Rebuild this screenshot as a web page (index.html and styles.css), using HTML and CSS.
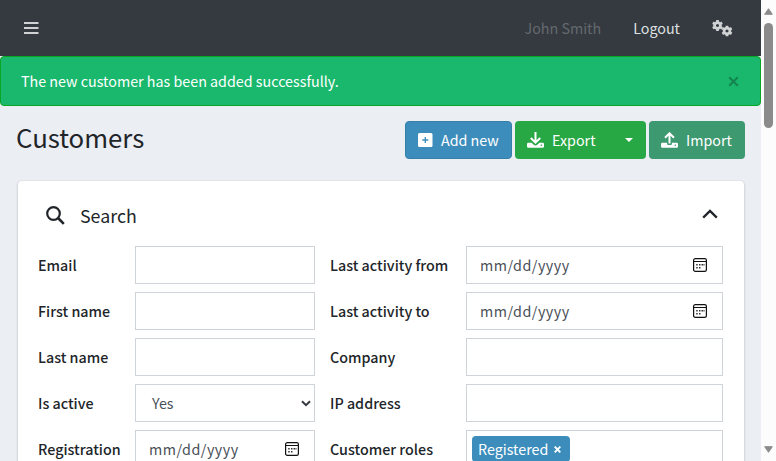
FILE: index.html
```html
<!DOCTYPE html>
<html lang="en">
<head>
<meta charset="utf-8">
<title>Customers</title>
<link rel="stylesheet" href="styles.css">
</head>
<body>
<svg class="defs" width="0" height="0">
  <symbol id="calendar" viewBox="0 0 14 14">
    <rect x=".6" y=".6" width="12.8" height="12.8" rx="1.7" fill="none" stroke="#111" stroke-width="1.2"/>
    <path d="M1 3.500h12" stroke="#111" stroke-width="1"/>
    <path d="M6 6h1.500v1.500H6zM8.500 6H10v1.500H8.500zM3.200 6h1.500v1.500H3.200zM10.500 6h1v1.500h-1zM3.200 9h1.500v1.500H3.200zM6 9h1.500v1.500H6z" fill="#333"/>
  </symbol>
  <symbol id="gear" viewBox="-6 -6 12 12">
    <circle r="3.200" fill="none" stroke="currentColor" stroke-width="3"/>
    <path d="M0-5.900v2M0 3.900v2M-5.100-3l1.700 1M3.400 2l1.700 1M-5.100 3l1.700-1M3.400-2l1.700-1" stroke="currentColor" stroke-width="3"/>
  </symbol>
</svg>
<div class="window">
  <div class="page">
    <header class="navbar">
      <svg class="bars" width="15" height="12" viewBox="0 0 15 12"><path d="M0 1h14.500M0 6h14.500M0 11h14.500" stroke="currentColor" stroke-width="2"/></svg>
      <span class="user">John Smith</span>
      <span class="logout">Logout</span>
      <svg class="gears" width="21" height="17" viewBox="0 0 21 17"><use href="#gear" x="0" y="0" width="11" height="11"/><use href="#gear" x="9.500" y="5.500" width="11" height="11"/></svg>
    </header>
    <div class="alert">
      <span class="alert-text">The new customer has been added successfully.</span>
      <svg class="close" width="11" height="11" viewBox="0 0 11 11"><path d="M1.200 1.200l8.600 8.600M9.800 1.200L1.200 9.800" stroke="currentColor" stroke-width="2"/></svg>
    </div>
    <div class="title-row">
      <h1>Customers</h1>
      <div class="btn add">
        <svg width="15" height="14" viewBox="0 0 15 14"><rect width="14.500" height="14" rx="1.500" fill="#fff"/><path d="M7.300 4v6M4.300 7h6" stroke="#3c8dbc" stroke-width="1.300"/></svg>
        <span>Add new</span>
      </div>
      <div class="btn export">
        <svg width="17" height="16" viewBox="0 0 17 16"><path d="M8.500 0v10M3.800 6l4.700 4.600L13.200 6" fill="none" stroke="#fff" stroke-width="2"/><path d="M1.400 10.700h3.200l2.100 2.100q1.800 1.400 3.600 0l2.100-2.100h3.200q1.400 0 1.400 1.400v2.300q0 1.400-1.400 1.400H1.400Q0 15.800 0 14.400v-2.300q0-1.400 1.400-1.400z" fill="#fff"/><circle cx="14.300" cy="13.300" r=".8" fill="#28a745"/></svg>
        <span>Export</span>
        <i class="caret"></i>
      </div>
      <div class="btn import">
        <svg width="17" height="16" viewBox="0 0 17 16"><path d="M8.500 11.500V1.500M4 5.700l4.500-4.400L13 5.700" fill="none" stroke="#fff" stroke-width="2"/><path d="M1.400 10.700h4.700v1.200q0 1.200 2.400 1.200t2.400-1.200v-1.200h4.700q1.400 0 1.400 1.400v2.300q0 1.400-1.400 1.400H1.400Q0 15.800 0 14.400v-2.300q0-1.400 1.400-1.400z" fill="#fff"/><circle cx="14.300" cy="13.300" r=".8" fill="#3d9970"/></svg>
        <span>Import</span>
      </div>
    </div>
    <main class="card">
      <div class="card-head">
        <svg width="19" height="19" viewBox="0 0 19 19"><circle cx="7.500" cy="7.500" r="6.300" fill="none" stroke="currentColor" stroke-width="2.200"/><path d="M12 12l5.800 5.800" stroke="currentColor" stroke-width="2.600"/></svg>
        <h2>Search</h2>
        <svg class="chevron" width="16" height="10" viewBox="0 0 16 10"><path d="M1.200 8.600L8 1.900l6.800 6.700" fill="none" stroke="currentColor" stroke-width="2.300"/></svg>
      </div>
      <form class="fields">
        <label>Email</label><div class="field"></div>
        <label>Last activity from</label><div class="field date"><span>mm/dd/yyyy</span><svg width="14" height="14"><use href="#calendar"/></svg></div>
        <label>First name</label><div class="field"></div>
        <label>Last activity to</label><div class="field date"><span>mm/dd/yyyy</span><svg width="14" height="14"><use href="#calendar"/></svg></div>
        <label>Last name</label><div class="field"></div>
        <label>Company</label><div class="field"></div>
        <label>Is active</label><div class="field select"><span>Yes</span><svg width="10" height="7" viewBox="0 0 10 7"><path d="M1 1.200l4 4 4-4" fill="none" stroke="#343a40" stroke-width="2"/></svg></div>
        <label>IP address</label><div class="field"></div>
        <label>Registration</label><div class="field date"><span>mm/dd/yyyy</span><svg width="14" height="14"><use href="#calendar"/></svg></div>
        <label>Customer roles</label><div class="field roles"><div class="tag"><span>Registered</span><svg width="7" height="7" viewBox="0 0 7 7"><path d="M.7.7l5.600 5.600M6.300.7L.7 6.300" stroke="#fff" stroke-width="1.900"/></svg></div></div>
      </form>
    </main>
  </div>
  <div class="scrollbar">
    <svg width="9" height="7" viewBox="0 0 9 7"><path d="M4.500.7L8.300 6.300H.7z" fill="#8b8b8b" stroke="#8b8b8b" stroke-linejoin="round"/></svg>
    <div class="thumb"></div>
    <svg class="down" width="9" height="7" viewBox="0 0 9 7"><path d="M4.500 6.300L.7.700h7.600z" fill="#8b8b8b" stroke="#8b8b8b" stroke-linejoin="round"/></svg>
  </div>
</div>
</body>
</html>
```
FILE: styles.css
```css
* { box-sizing: border-box; }
body { margin: 0; overflow: hidden; font: 14.300px/24px "Noto Sans CJK SC", sans-serif; color: #212529; }
svg { display: block; flex: none; }
.defs { position: absolute; }
span, h1, h2, label { white-space: nowrap; }
.window { display: grid; grid-template-columns: 761px 15px; height: 461px; overflow: hidden; }
.page { height: 461px; overflow: hidden; background: #ebeef3; }
.navbar { height: 56px; background: #343a40; color: #d0d2d3; display: flex; align-items: center; padding: 0 28px 0 24px; }
.user { margin-left: auto; color: #65696d; }
.logout { margin-left: 32px; color: #dfe0e1; }
.gears { margin-left: 32px; }
.alert { height: 50px; background: #19b86d; border: 1px solid #08a623; border-radius: 4px; color: #fff; display: flex; align-items: center; justify-content: space-between; padding: 0 21px 0 20px; }
.close { color: #148550; }
.title-row { height: 75px; padding: 15px 16px 0; display: flex; align-items: flex-start; }
h1 { margin: -2px auto 0 0; font-size: 25.750px; line-height: 36px; font-weight: 400; }
.btn { height: 38px; border-radius: 4px; color: #fff; display: flex; align-items: center; }
.btn svg { margin-right: 8px; }
.add { width: 107px; background: #3c8dbc; border: 1px solid #367fa9; padding-left: 12px; }
.export { width: 131px; margin: 0 3px; background: #28a745; padding-left: 12px; }
.import { width: 96px; background: #3d9970; padding-left: 12px; }
.caret { margin: 0 13px 0 auto; border: 4px solid transparent; border-top-color: #fff; border-bottom: 0; }
.card { margin: 0 17px 0 18px; height: 400px; background: #fff; border-radius: 4px; box-shadow: 0 0 1px rgba(0,0,0,.13), 0 1px 3px rgba(0,0,0,.2); }
.card-head { height: 65px; padding: 3px 26px 0 28px; display: flex; align-items: center; }
h2 { margin: 0 auto 0 15px; font-size: 17.800px; line-height: 24px; font-weight: 400; }
.chevron { margin-top: -2px; }
.fields { display: grid; grid-template-columns: 97px 180px 15px 136px 257px; grid-auto-rows: 38px; row-gap: 8px; padding-left: 20px; align-items: center; }
label { font-weight: 500; }
label:nth-of-type(odd) { grid-column: 1; }
label:nth-of-type(even) { grid-column: 4; }
.field { height: 38px; border: 1px solid #ced4da; color: #495057; display: flex; align-items: center; }
.date { padding: 0 15px 0 13px; justify-content: space-between; }
.date span { letter-spacing: .5px; }
.select { padding: 0 3px 0 16px; justify-content: space-between; }
.roles { padding-left: 5px; }
.tag { width: 98px; height: 26px; border-radius: 4px; background: #3c8dbc; color: #fff; display: flex; align-items: center; justify-content: space-between; padding: 0 9px 0 6px; }
.scrollbar { background: #fcfcfc; height: 461px; display: flex; flex-direction: column; align-items: center; padding: 8px 0; }
.thumb { width: 9px; height: 105px; margin-top: 8px; border-radius: 5px; background: #8b8b8b; }
.down { margin-top: auto; }
```
